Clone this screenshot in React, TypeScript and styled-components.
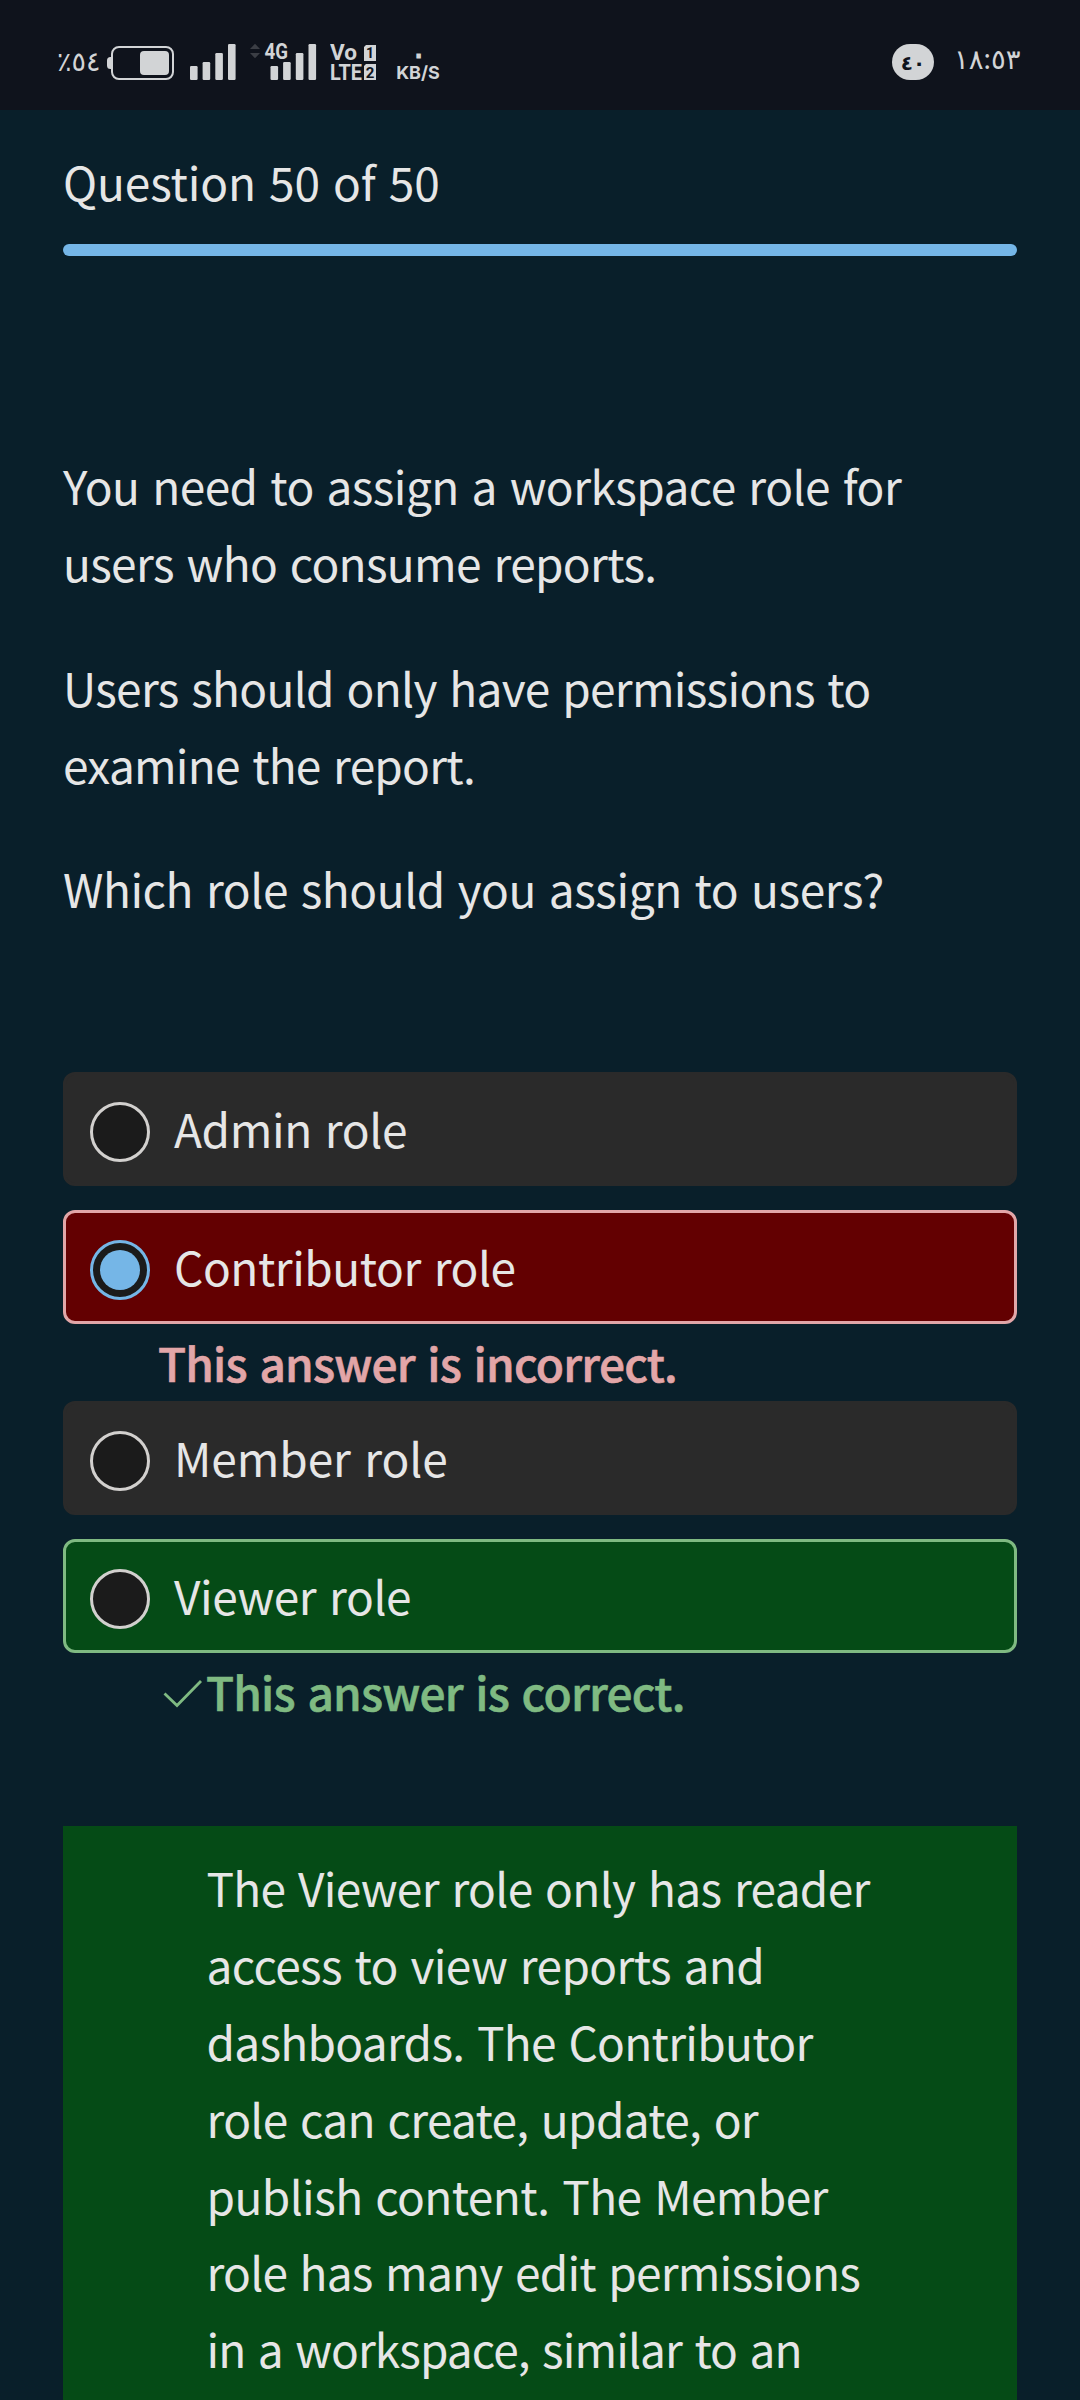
import React from "react";
import styled, { createGlobalStyle } from "styled-components";

const color = {
  page: "#091f2a",
  status: "#0f131c",
  statusText: "#d2d4d6",
  text: "#e6e6e6",
  accent: "#75b6e7",
  row: "#2a2a2a",
  radio: "#1b1b1b",
  danger: "#e2a6a8",
  dangerBg: "#630001",
  success: "#7fba82",
  successBg: "#054b16",
};

const GlobalStyle = createGlobalStyle`
  body {
    margin: 0;
    background: ${color.page};
  }
  * { box-sizing: border-box; }
`;

const Screen = styled.div`
  display: flex;
  flex-direction: column;
  width: 1080px;
  height: 2400px;
  overflow: hidden;
  background: ${color.page};
  color: ${color.text};
  font-family: "Noto Sans CJK SC", "Noto Sans", sans-serif;
  font-size: 46px;
  line-height: 76.8px;
  word-spacing: 3px;
`;

/* ---------- status bar ---------- */

const StatusBar = styled.header`
  display: flex;
  justify-content: space-between;
  flex: none;
  height: 110px;
  padding: 43px 64px 0 57px;
  background: ${color.status};
  color: ${color.statusText};
  font-family: "Noto Sans", "DejaVu Sans", sans-serif;
  word-spacing: 0;
`;

const StatusGroup = styled.div`
  display: flex;
  align-items: flex-start;
`;

const BatteryPercent = styled.span`
  width: 49px;
  height: 38px;
  font-size: 27px;
  line-height: 36px;
  direction: ltr;
  unicode-bidi: bidi-override;
`;

const StatusIcon = styled.svg<{ $gap: number }>`
  display: block;
  height: 40px;
  margin-right: ${(p) => p.$gap}px;
  fill: ${color.statusText};
  font-family: Roboto, "Noto Sans", sans-serif;
  font-weight: 700;
`;

const Speed = styled.div`
  display: flex;
  flex-direction: column;
  align-items: center;
  width: 44px;
  font-family: Inter, Roboto, sans-serif;
  font-weight: 700;
`;

const SpeedValue = styled.span`
  height: 19px;
  font-family: "Noto Sans", sans-serif;
  font-size: 32px;
  line-height: 20px;
`;

const SpeedUnit = styled.span`
  font-size: 18px;
  line-height: 22px;
`;

const Badge = styled.span`
  display: flex;
  justify-content: center;
  width: 42px;
  height: 36px;
  margin: 1px 20px 0 0;
  border-radius: 18px;
  background: ${color.statusText};
  color: ${color.status};
  font-size: 20px;
  font-weight: 600;
  line-height: 38px;
`;

const Clock = styled.span`
  width: 62px;
  font-size: 27.5px;
  line-height: 32px;
  white-space: nowrap;
`;

/* ---------- quiz ---------- */

const Page = styled.main`
  display: flex;
  flex-direction: column;
  padding: 33px 63px 0;
`;

const Line = styled.span<{ $track: number }>`
  display: block;
  white-space: nowrap;
  letter-spacing: ${(p) => p.$track}px;
`;

const Progress = styled.div`
  height: 12px;
  margin-top: 24px;
  border-radius: 6px;
  background: ${color.accent};
`;

const Prompt = styled.section`
  display: flex;
  flex-direction: column;
  gap: 48px;
  margin-top: 191.4px;
`;

const Paragraph = styled.p`
  margin: 0;
`;

const Options = styled.ul`
  display: flex;
  flex-direction: column;
  margin: 144.8px 0 0;
  padding: 0;
  list-style: none;
`;

type Tone = "plain" | "danger" | "success";

const rowFill = { plain: color.row, danger: color.dangerBg, success: color.successBg };
const rowEdge = { plain: color.row, danger: color.danger, success: color.success };

const OptionRow = styled.label<{ $tone: Tone }>`
  display: flex;
  align-items: flex-start;
  gap: 24px;
  height: 114px;
  padding: 15px 24px 0;
  border: 3px solid ${(p) => rowEdge[p.$tone]};
  border-radius: 12px;
  background: ${(p) => rowFill[p.$tone]};
`;

const Radio = styled.span<{ $checked: boolean }>`
  display: flex;
  align-items: center;
  justify-content: center;
  flex: none;
  width: 60px;
  height: 60px;
  margin-top: 12px;
  border: 3px solid ${(p) => (p.$checked ? color.accent : "#d2d0ce")};
  border-radius: 50%;
  background: ${color.radio};
`;

const RadioDot = styled.span`
  width: 40px;
  height: 40px;
  border-radius: 50%;
  background: ${color.accent};
`;

const OptionItem = styled.li<{ $spaced: boolean }>`
  margin-bottom: ${(p) => (p.$spaced ? 24 : 0)}px;
`;

const Feedback = styled.div<{ $tone: Tone }>`
  display: flex;
  height: 77px;
  padding-left: 95px;
  color: ${(p) => rowEdge[p.$tone]};
  font-weight: 500;
  -webkit-text-stroke: 0.6px currentColor;
`;

const Check = styled.svg`
  display: block;
  width: 48px;
  height: 77px;
  fill: none;
  stroke: currentColor;
  stroke-width: 2.8;
`;

const Explanation = styled.section`
  height: 700px;
  margin-top: 96px;
  padding: 23.4px 0 0 143.5px;
  background: ${color.successBg};
`;

const bars = [
  { x: 0, top: 23 },
  { x: 12.6, top: 19 },
  { x: 25.3, top: 10 },
  { x: 38, top: 1 },
];

function SignalBars({ x = 0 }: { x?: number }) {
  return (
    <g transform={`translate(${x} 0)`}>
      {bars.map((b) => (
        <rect key={b.x} x={b.x} y={b.top} width="7.6" height={37 - b.top} rx="1.2" />
      ))}
    </g>
  );
}

type TextLine = [string, number];

const prompt: TextLine[][] = [
  [
    ["You need to assign a workspace role for", -0.55],
    ["users who consume reports.", -0.67],
  ],
  [
    ["Users should only have permissions to", -0.7],
    ["examine the report.", -0.79],
  ],
  [["Which role should you assign to users?", -0.45]],
];

const options: { label: TextLine; tone: Tone; checked?: boolean; feedback?: TextLine }[] = [
  { label: ["Admin role", -0.38], tone: "plain" },
  {
    label: ["Contributor role", -0.46],
    tone: "danger",
    checked: true,
    feedback: ["This answer is incorrect.", -0.78],
  },
  { label: ["Member role", -0.05], tone: "plain" },
  { label: ["Viewer role", -0.44], tone: "success", feedback: ["This answer is correct.", -0.78] },
];

const explanation: TextLine[] = [
  ["The Viewer role only has reader", -0.68],
  ["access to view reports and", -0.63],
  ["dashboards. The Contributor", -0.7],
  ["role can create, update, or", -0.7],
  ["publish content. The Member", -0.58],
  ["role has many edit permissions", -0.79],
  ["in a workspace, similar to an", -0.91],
];

function Lines({ lines }: { lines: TextLine[] }) {
  return (
    <>
      {lines.map(([text, track]) => (
        <Line key={text} $track={track}>
          {text}
        </Line>
      ))}
    </>
  );
}

export default function App() {
  return (
    <Screen>
      <GlobalStyle />
      <StatusBar>
        <StatusGroup>
          <BatteryPercent>٪٥٤</BatteryPercent>
          <StatusIcon $gap={15} width="69" viewBox="0 0 69 40">
            <path d="M6 14v12h-1.500a3.500 3.500 0 0 1-3.500-3.500v-5a3.500 3.500 0 0 1 3.500-3.500z" />
            <rect x="6" y="4" width="61" height="32" rx="7" fill="none" stroke={color.statusText} strokeWidth="2" />
            <rect x="34" y="8" width="29" height="24" rx="4" />
          </StatusIcon>
          <StatusIcon $gap={13} width="47" viewBox="0 0 47 40">
            <SignalBars />
          </StatusIcon>
          <StatusIcon $gap={13} width="67" viewBox="0 0 67 40">
            <path d="M5.500 .8l5 5.200h-10zM5.500 15.200l5-5.200h-10z" transform="translate(-.5 0)" fill="#3b3e45" />
            <text x="14.500" y="16" fontSize="21.500" textLength="23.500" lengthAdjust="spacingAndGlyphs">4G</text>
            <SignalBars x={20.5} />
          </StatusIcon>
          <StatusIcon $gap={19} width="47" viewBox="0 0 47 40">
            <text x="0" y="17.200" fontSize="22" textLength="27" lengthAdjust="spacingAndGlyphs">Vo</text>
            <text x="0" y="37" fontSize="22" textLength="32" lengthAdjust="spacingAndGlyphs">LTE</text>
            <path d="M36 2h10v16h-12v-14z" />
            <path d="M36 21h10v16h-12v-14z" />
            <text x="40" y="15" fontSize="14" textAnchor="middle" fill={color.status}>1</text>
            <text x="40" y="34.500" fontSize="15" textAnchor="middle" fill={color.status}>2</text>
          </StatusIcon>
          <Speed>
            <SpeedValue>٠</SpeedValue>
            <SpeedUnit>KB/S</SpeedUnit>
          </Speed>
        </StatusGroup>
        <StatusGroup>
          <Badge>٤٠</Badge>
          <Clock>١٨:٥٣</Clock>
        </StatusGroup>
      </StatusBar>

      <Page>
        <Line $track={-0.13}>Question 50 of 50</Line>
        <Progress />

        <Prompt>
          {prompt.map((lines) => (
            <Paragraph key={lines[0][0]}>
              <Lines lines={lines} />
            </Paragraph>
          ))}
        </Prompt>

        <Options>
          {options.map(({ label, tone, checked, feedback }) => (
            <OptionItem key={label[0]} $spaced={!feedback}>
              <OptionRow $tone={tone}>
                <Radio $checked={!!checked}>{checked && <RadioDot />}</Radio>
                <Lines lines={[label]} />
              </OptionRow>
              {feedback && (
                <Feedback $tone={tone}>
                  {tone === "success" && (
                    <Check viewBox="0 0 48 77">
                      <path d="M6.500 40.500L19 52.500L43 28" />
                    </Check>
                  )}
                  <Lines lines={[feedback]} />
                </Feedback>
              )}
            </OptionItem>
          ))}
        </Options>

        <Explanation>
          <Lines lines={explanation} />
        </Explanation>
      </Page>
    </Screen>
  );
}
